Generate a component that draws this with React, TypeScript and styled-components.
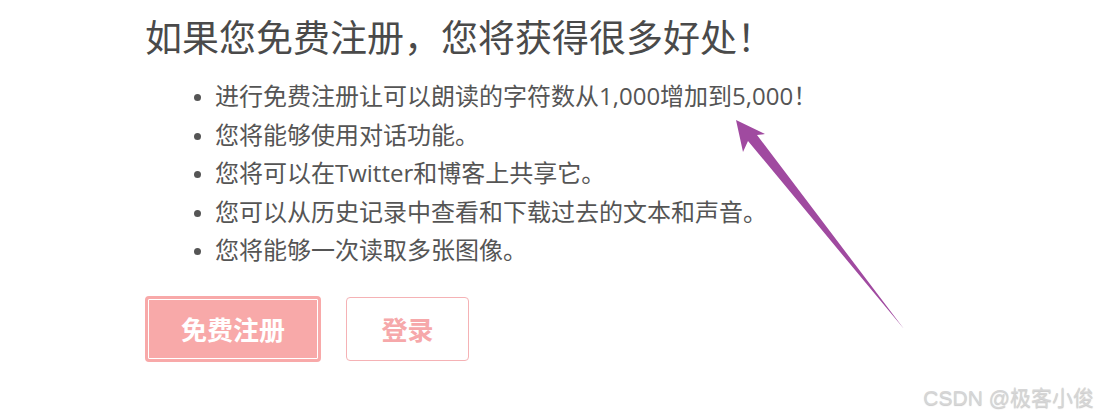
import React from 'react';
import styled, { createGlobalStyle } from 'styled-components';

const GlobalStyle = createGlobalStyle`
  html, body {
    margin: 0;
    padding: 0;
    background: #fff;
  }
  body {
    font-family: 'Open Sans', 'Noto Sans CJK SC', sans-serif;
  }
`;

const Page = styled.div`
  position: relative;
  width: 1098px;
  height: 415px;
  overflow: hidden;
  background: #fff;
`;

const Content = styled.section`
  padding: 16px 0 0 145px;
`;

const Title = styled.h2`
  margin: 0;
  font-size: 37px;
  font-weight: 400;
  line-height: 44px;
  color: #4a4a4a;
`;

const Benefits = styled.ul`
  margin: 17px 0 0;
  padding-left: 70px;
  list-style: disc;
  color: #555;
  li {
    font-size: 24px;
    line-height: 38.5px;
  }
  li::marker {
    font-size: 20px;
  }
`;

const Actions = styled.div`
  display: flex;
  gap: 25px;
  margin-top: 26px;
`;

const Button = styled.button<{ $primary?: boolean }>`
  height: ${(p) => (p.$primary ? '66px' : '64px')};
  margin-top: ${(p) => (p.$primary ? '0' : '1px')};
  padding: 0;
  width: ${(p) => (p.$primary ? '176px' : '123px')};
  border-radius: 4px;
  font-family: 'Noto Sans CJK SC', sans-serif;
  font-size: 26px;
  font-weight: 700;
  cursor: pointer;
  background: ${(p) => (p.$primary ? '#f8a9a9' : '#fff')};
  color: ${(p) => (p.$primary ? '#fff' : '#f6a8aa')};
  border: ${(p) => (p.$primary ? '3px solid #f8a9a9' : '1px solid #f5b2b5')};
  box-shadow: ${(p) => (p.$primary ? 'inset 0 0 0 1px #fff' : 'none')};
`;

const Arrow = styled.svg`
  position: absolute;
  left: 0;
  top: 0;
  pointer-events: none;
`;

const Watermark = styled.div`
  position: absolute;
  right: 4px;
  bottom: 4px;
  font-family: 'Liberation Sans', 'Noto Sans CJK SC', sans-serif;
  font-size: 21px;
  font-weight: 400;
  color: #d6d6d6;
  text-shadow: 0 1px 1px #c8c8c8;
`;

const items = [
  '进行免费注册让可以朗读的字符数从1,000增加到5,000！',
  '您将能够使用对话功能。',
  '您将可以在Twitter和博客上共享它。',
  '您可以从历史记录中查看和下载过去的文本和声音。',
  '您将能够一次读取多张图像。',
];

export default function App() {
  return (
    <Page>
      <GlobalStyle />
      <Content>
        <Title>如果您免费注册，您将获得很多好处！</Title>
        <Benefits>
          {items.map((t) => (
            <li key={t}>{t}</li>
          ))}
        </Benefits>
        <Actions>
          <Button $primary>免费注册</Button>
          <Button>登录</Button>
        </Actions>
      </Content>
      <Arrow width="1098" height="415" viewBox="0 0 1098 415">
        <polygon
          points="736,120 765,134 757,135 904,329 748,141 743,152"
          fill="#a04aa0"
        />
      </Arrow>
      <Watermark>CSDN @极客小俊</Watermark>
    </Page>
  );
}
